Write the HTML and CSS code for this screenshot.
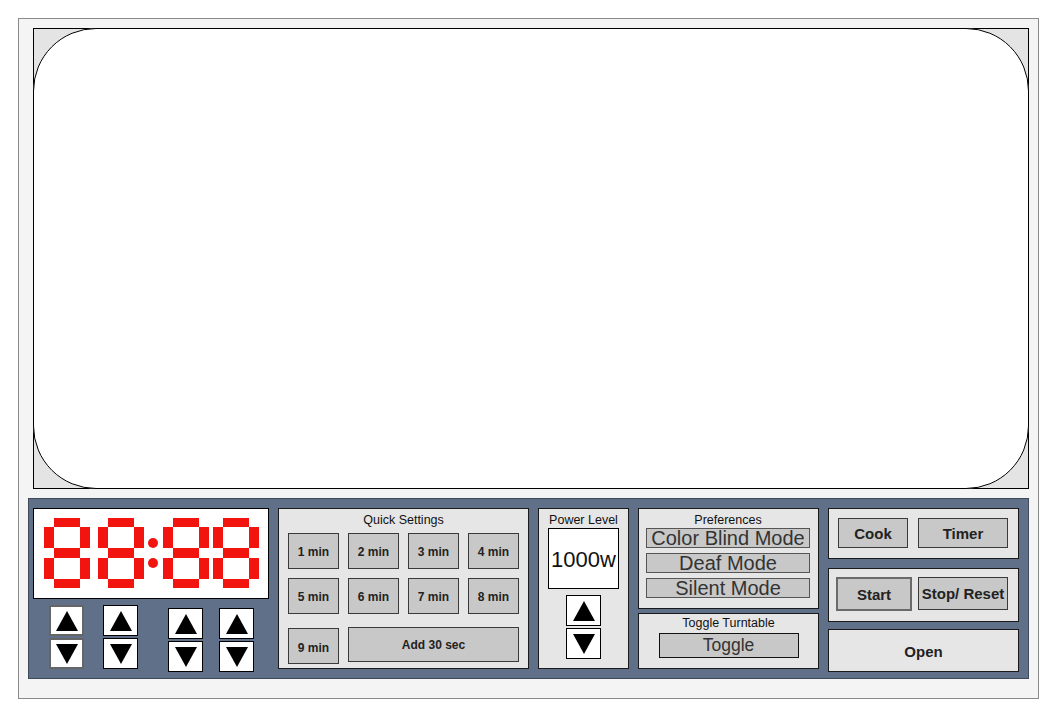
FILE: index.html
```html
<!DOCTYPE html>
<html>
<head>
<meta charset="utf-8">
<title>Microwave</title>
<link rel="stylesheet" href="styles.css">
</head>
<body>
<div class="frame">
  <div class="window"><div class="glass"></div></div>
  <div class="panel">
    <div class="clock-col">
      <div class="clock">
        <svg class="digits" width="234" height="89" viewBox="0 0 234 89">
          <defs>
            <g id="seg8" fill="#f2140f">
              <rect x="10" y="0" width="26" height="9"/>
              <rect x="0" y="9" width="10" height="21"/>
              <rect x="36" y="9" width="10" height="21"/>
              <rect x="10" y="30" width="26" height="10"/>
              <rect x="0" y="40" width="10" height="21"/>
              <rect x="36" y="40" width="10" height="21"/>
              <rect x="10" y="61" width="26" height="9"/>
            </g>
          </defs>
          <use href="#seg8" x="10" y="9"/>
          <use href="#seg8" x="64" y="9"/>
          <circle cx="119" cy="34" r="5" fill="#f2140f"/>
          <circle cx="119" cy="54" r="5" fill="#f2140f"/>
          <use href="#seg8" x="129" y="9"/>
          <use href="#seg8" x="179" y="9"/>
        </svg>
      </div>
      <div class="steppers">
        <div class="stepper s1">
          <div class="arrow focus"><svg class="tri" viewBox="0 0 22 20"><polygon points="11,0 22,20 0,20"/></svg></div>
          <div class="arrow focus"><svg class="tri" viewBox="0 0 22 20"><polygon points="0,0 22,0 11,20"/></svg></div>
        </div>
        <div class="stepper s2">
          <div class="arrow"><svg class="tri" viewBox="0 0 22 20"><polygon points="11,0 22,20 0,20"/></svg></div>
          <div class="arrow"><svg class="tri" viewBox="0 0 22 20"><polygon points="0,0 22,0 11,20"/></svg></div>
        </div>
        <div class="stepper s3">
          <div class="arrow"><svg class="tri" viewBox="0 0 22 20"><polygon points="11,0 22,20 0,20"/></svg></div>
          <div class="arrow"><svg class="tri" viewBox="0 0 22 20"><polygon points="0,0 22,0 11,20"/></svg></div>
        </div>
        <div class="stepper s4">
          <div class="arrow"><svg class="tri" viewBox="0 0 22 20"><polygon points="11,0 22,20 0,20"/></svg></div>
          <div class="arrow"><svg class="tri" viewBox="0 0 22 20"><polygon points="0,0 22,0 11,20"/></svg></div>
        </div>
      </div>
    </div>

    <div class="box quick">
      <div class="title">Quick Settings</div>
      <div class="qgrid">
        <div class="btn">1 min</div>
        <div class="btn">2 min</div>
        <div class="btn">3 min</div>
        <div class="btn">4 min</div>
        <div class="btn">5 min</div>
        <div class="btn">6 min</div>
        <div class="btn">7 min</div>
        <div class="btn">8 min</div>
        <div class="btn nine">9 min</div>
        <div class="btn add">Add 30 sec</div>
      </div>
    </div>

    <div class="box power">
      <div class="title">Power Level</div>
      <div class="watts">1000w</div>
      <div class="stepper pstep">
        <div class="arrow"><svg class="tri" viewBox="0 0 22 20"><polygon points="11,0 22,20 0,20"/></svg></div>
        <div class="arrow"><svg class="tri" viewBox="0 0 22 20"><polygon points="0,0 22,0 11,20"/></svg></div>
      </div>
    </div>

    <div class="col mid-col">
      <div class="box prefs">
        <div class="title">Preferences</div>
        <div class="pbtn">Color Blind Mode</div>
        <div class="pbtn">Deaf Mode</div>
        <div class="pbtn">Silent Mode</div>
      </div>
      <div class="box turntable">
        <div class="title tt">Toggle Turntable</div>
        <div class="toggle">Toggle</div>
      </div>
    </div>

    <div class="col act-col">
      <div class="box actrow first">
        <div class="btn big cook">Cook</div>
        <div class="btn big timer">Timer</div>
      </div>
      <div class="box actrow second">
        <div class="btn big start">Start</div>
        <div class="btn big stop">Stop/ Reset</div>
      </div>
      <div class="box open">Open</div>
    </div>
  </div>
</div>
</body>
</html>
```

FILE: styles.css
```css
* { box-sizing: border-box; }

body {
  margin: 0;
  background: #ffffff;
  font-family: "Liberation Sans", Arial, sans-serif;
  color: #111;
}

.frame {
  margin: 18px 0 0 18px;
  width: 1021px;
  height: 681px;
  border: 1px solid #8a8a8a;
  background: #f4f4f4;
  padding: 9px 0 0 9px;
}

.window {
  margin-left: 5px;
  width: 996px;
  height: 461px;
  border: 1px solid #000;
  background: #e4e4e4;
}

.glass {
  margin: -1px;
  height: calc(100% + 2px);
  border: 1px solid #000;
  border-radius: 63px;
  background: #fff;
}

.panel {
  margin-top: 9px;
  width: 1001px;
  height: 181px;
  background: #5f7088;
  border: 1px solid #3e4a5a;
  padding: 9px 9px 0 4px;
  display: flex;
  align-items: flex-start;
  gap: 9px;
}

/* clock */
.clock-col { width: 236px; }

.clock {
  width: 236px;
  height: 91px;
  background: #fff;
  border: 1px solid #000;
}

.digits { display: block; }

.steppers {
  display: flex;
  align-items: flex-start;
  margin-top: 6px;
  padding-left: 16px;
}

.stepper {
  display: flex;
  flex-direction: column;
  gap: 2px;
}

.s2 { margin-left: 19px; }
.s3 { margin-left: 30px; margin-top: 3px; }
.s4 { margin-left: 16px; margin-top: 3px; }

.arrow {
  width: 35px;
  height: 31px;
  background: #fff;
  border: 1px solid #000;
  display: flex;
  align-items: center;
  justify-content: center;
}

.arrow.focus { border: 2px solid #666; }

.tri {
  width: 22px;
  height: 20px;
  display: block;
  fill: #000;
}

/* generic boxes */
.box {
  background: #e6e6e6;
  border: 1px solid #1a1a1a;
}

.title {
  padding-top: 4px;
  height: 19px;
  line-height: 15px;
  font-size: 12.5px;
  text-align: center;
  color: #111;
}

.btn {
  background: #c8c8c8;
  border: 1px solid #3a3a3a;
  font-weight: bold;
  font-size: 12px;
  color: #222;
  display: flex;
  align-items: center;
  justify-content: center;
}

/* quick settings */
.quick {
  width: 251px;
  height: 161px;
}

.quick .title { margin-bottom: 5px; }

.qgrid {
  display: grid;
  grid-template-columns: repeat(4, 51px);
  grid-auto-rows: 36px;
  align-items: start;
  column-gap: 9px;
  row-gap: 9px;
  padding-left: 9px;
}

.qgrid .btn { padding-top: 1px; height: 36px; }

.qgrid .nine { margin-top: 5px; padding-top: 3px; height: 36px; }

.qgrid .add {
  grid-column: 2 / span 3;
  margin-top: 4px;
  height: 35px;
}

/* power */
.power {
  width: 91px;
  height: 161px;
  display: flex;
  flex-direction: column;
  align-items: center;
}

.watts {
  width: 71px;
  height: 61px;
  background: #fff;
  border: 1px solid #000;
  font-size: 22px;
  display: flex;
  align-items: center;
  justify-content: center;
  padding-top: 3px;
  color: #111;
}

.pstep { margin-top: 6px; }

/* middle column */
.col {
  display: flex;
  flex-direction: column;
}

.mid-col { width: 181px; gap: 4px; }

.prefs {
  height: 101px;
  padding: 0 8px 0 7px;
}

.pbtn {
  height: 20px;
  margin-bottom: 5px;
  background: #c8c8c8;
  border: 1px solid #555;
  font-size: 20px;
  line-height: 18px;
  text-align: center;
  color: #333;
  white-space: nowrap;
}

.turntable {
  height: 56px;
  display: flex;
  flex-direction: column;
  align-items: center;
}

.title.tt { padding-top: 2px; height: 19px; align-self: stretch; }

.toggle {
  width: 140px;
  height: 25px;
  background: #c8c8c8;
  border: 1px solid #111;
  font-size: 17.5px;
  line-height: 22px;
  text-align: center;
  color: #333;
}

/* action column */
.act-col { width: 191px; }

.actrow {
  display: flex;
  align-items: flex-start;
  gap: 10px;
}

.first {
  height: 51px;
  padding: 9px 0 0 9px;
}

.big { font-size: 15px; }

.cook { width: 70px; height: 30px; }
.timer { width: 90px; height: 30px; }

.second {
  margin-top: 9px;
  height: 54px;
  padding: 8px 0 0 7px;
  gap: 6px;
}

.start {
  width: 76px;
  height: 34px;
  border: 2px solid #6a6a6a;
}

.stop { width: 90px; height: 33px; }

.open {
  margin-top: 7px;
  height: 43px;
  font-size: 15px;
  font-weight: bold;
  color: #222;
  display: flex;
  align-items: center;
  justify-content: center;
  padding-top: 1px;
}
```
